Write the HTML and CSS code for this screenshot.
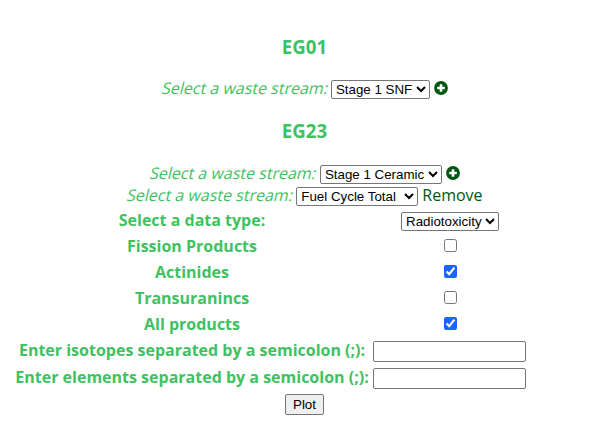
FILE: index.html
```html
<!DOCTYPE html>
<html lang="en">
<head>
<meta charset="utf-8">
<title>Waste streams</title>
<link rel="stylesheet" href="styles.css">
</head>
<body>
<form class="panel">
  <h3 class="group-title">EG01</h3>
  <div class="stream"><span class="prompt">Select a waste stream:</span>
    <select class="w-snf"><option>Stage 1 SNF</option></select>
    <svg class="plus" viewBox="0 0 14 14"><circle cx="7" cy="7" r="6.9"/><path d="M7 3.2v7.6M3.2 7h7.6"/></svg>
  </div>
  <h3 class="group-title second">EG23</h3>
  <div class="stream"><span class="prompt wide">Select a waste stream:</span>
    <select class="w-ceramic"><option>Stage 1 Ceramic</option></select>
    <svg class="plus" viewBox="0 0 14 14"><circle cx="7" cy="7" r="6.9"/><path d="M7 3.2v7.6M3.2 7h7.6"/></svg>
  </div>
  <div class="stream"><span class="prompt">Select a waste stream:</span>
    <select class="w-total"><option>Fuel Cycle Total</option></select>
    <a class="remove">Remove</a>
  </div>
  <div class="options">
    <label>Select a data type:</label><div><select class="w-type"><option>Radiotoxicity</option></select></div>
    <label>Fission Products</label><div><input type="checkbox"></div>
    <label>Actinides</label><div><input type="checkbox" checked></div>
    <label>Transuranincs</label><div><input type="checkbox"></div>
    <label>All products</label><div><input type="checkbox" checked></div>
    <label>Enter isotopes separated by a semicolon (;):</label><div><input type="text"></div>
    <label>Enter elements separated by a semicolon (;):</label><div><input type="text"></div>
  </div>
  <button class="plot" type="button">Plot</button>
</form>
</body>
</html>
```
FILE: styles.css
```css
* { box-sizing: border-box; }
body { margin: 0; background: #fff; color: #3ec261; font: 16px/22px "Open Sans", sans-serif; }
.panel { display: flex; flex-direction: column; align-items: center; width: 609px; padding-top: 34px; }
.group-title { margin: 0; font-size: 18.7px; line-height: 26px; font-weight: 700; }
.stream { display: flex; align-items: center; gap: 4px; height: 22px; white-space: nowrap; }
.group-title + .stream { margin-top: 18px; }
.second + .stream { margin-top: 19px; }
.stream + .group-title { margin-top: 18px; }
.prompt { margin-top: -2px; transform: skewX(-14deg); transform-origin: 0 17px; }
.wide { margin-right: 1px; }
select, button { font: 13.333px "Liberation Sans", Arial, sans-serif; color: #000; }
select { height: 19px; margin: 0; padding: 0; background: #fff; border: 1px solid #767676; border-radius: 2px; }
.w-snf { width: 99px; }
.w-ceramic { width: 122px; }
.w-total { width: 122px; }
.w-type { width: 98px; margin-top: 3px; }
.plus { width: 14px; height: 14px; margin-top: -2px; fill: #00560f; stroke: #fff; stroke-width: 2.6px; }
.plus circle { stroke: none; }
.remove { margin-top: -2px; color: #00560f; }
.options { display: grid; grid-template-columns: 354px 154px; grid-template-rows: repeat(6, 26px) 28px; column-gap: 4px; align-self: flex-start; margin-left: 15px; align-items: center; text-align: center; font-weight: 700; }
.options label { white-space: nowrap; }
.options div { display: flex; justify-content: center; }
input[type="checkbox"] { width: 13px; height: 13px; margin: 0 0 1px; accent-color: #1a66ff; }
input[type="text"] { width: 153px; height: 21px; margin: 3px 1px 0 0; border: 1px solid #767676; border-radius: 2px; }
.plot { width: 39px; height: 21px; padding: 0; margin-top: 3px; border: 1px solid #767676; border-radius: 2px; background: #efefef; }
```
